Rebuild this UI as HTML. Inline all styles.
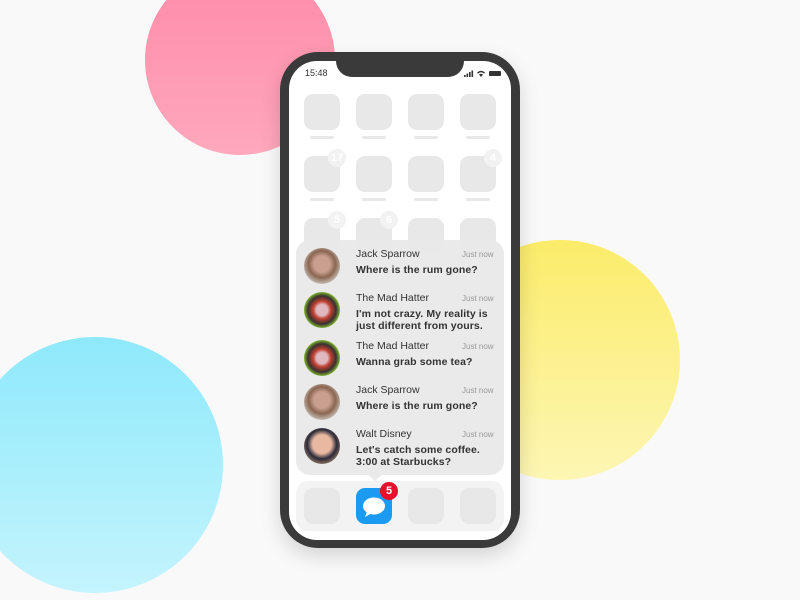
<!DOCTYPE html>
<html><head><style>
*{margin:0;padding:0;box-sizing:border-box}
body{width:800px;height:600px;background:#f9f9f9;position:relative;overflow:hidden;font-family:"Liberation Sans",sans-serif}
.c{position:absolute;border-radius:50%}
.phone{position:absolute;left:280px;top:52px;width:240px;height:496px;background:#3a3a3a;border-radius:38px;box-shadow:0 8px 20px rgba(0,0,0,.15)}
.screen{position:absolute;left:289px;top:61px;width:222px;height:479px;background:#fff;border-radius:28px;overflow:hidden}
.notch{position:absolute;left:336px;top:52px;width:128px;height:25px;background:#3a3a3a;border-radius:0 0 16px 16px}
.ic{position:absolute;width:36px;height:36px;background:#e8e8e8;border-radius:9px}
.lb{position:absolute;width:24px;height:3px;background:#e8e8e8;border-radius:2px}
.bd{position:absolute;width:18px;height:18px;border-radius:50%;background:#f2f2f2;color:#fff;font-size:11px;font-weight:bold;text-align:center;line-height:18px}
.panel{position:absolute;left:296px;top:240px;width:208px;height:235px;background:rgba(232,232,232,.93);border-radius:14px}
.av{position:absolute;left:304px;width:36px;height:36px;border-radius:50%}
.nm{position:absolute;left:356px;font-size:10.5px;color:#333}
.tm{position:absolute;left:462px;font-size:8px;color:#999}
.ms{position:absolute;left:356px;font-size:10.5px;font-weight:bold;color:#333;line-height:12px;letter-spacing:.1px}
</style></head><body>
<div class="c" style="left:145px;top:-35px;width:190px;height:190px;background:linear-gradient(#fd8aa6,#ffa8bc)"></div>
<div class="c" style="left:440px;top:240px;width:240px;height:240px;background:linear-gradient(#fbec6a,#fdf6b4)"></div>
<div class="c" style="left:-33px;top:337px;width:256px;height:256px;background:linear-gradient(#8ee9fb,#c4f4fd)"></div>
<div class="phone"></div>
<div class="screen"></div>
<div class="notch"></div>
<div style="position:absolute;left:305px;top:68px;font-size:9px;color:#333">15:48</div>
<svg style="position:absolute;left:463px;top:69px" width="40" height="9" viewBox="0 0 40 9">
<rect x="1" y="6" width="1.6" height="2" fill="#333"/><rect x="3.5" y="4.5" width="1.6" height="3.5" fill="#333"/><rect x="6" y="3" width="1.6" height="5" fill="#333"/><rect x="8.5" y="1.5" width="1.6" height="6.5" fill="#333"/>
<path d="M14 3.5 Q18 0 22 3.5 L21 4.6 Q18 2 15 4.6Z M16 5.5 Q18 4 20 5.5 L18 8Z" fill="#333"/>
<rect x="26" y="2" width="12" height="5" rx="1" fill="#333"/></svg>
<!-- icons -->
<div class="ic" style="left:304px;top:94px"></div><div class="ic" style="left:356px;top:94px"></div><div class="ic" style="left:408px;top:94px"></div><div class="ic" style="left:460px;top:94px"></div>
<div class="lb" style="left:310px;top:136px"></div><div class="lb" style="left:362px;top:136px"></div><div class="lb" style="left:414px;top:136px"></div><div class="lb" style="left:466px;top:136px"></div>
<div class="ic" style="left:304px;top:156px"></div><div class="ic" style="left:356px;top:156px"></div><div class="ic" style="left:408px;top:156px"></div><div class="ic" style="left:460px;top:156px"></div>
<div class="lb" style="left:310px;top:198px"></div><div class="lb" style="left:362px;top:198px"></div><div class="lb" style="left:414px;top:198px"></div><div class="lb" style="left:466px;top:198px"></div>
<div class="bd" style="left:328px;top:149px">17</div><div class="bd" style="left:484px;top:149px">4</div>
<div class="ic" style="left:304px;top:218px"></div><div class="ic" style="left:356px;top:218px"></div><div class="ic" style="left:408px;top:218px"></div><div class="ic" style="left:460px;top:218px"></div>
<div class="bd" style="left:328px;top:211px">5</div><div class="bd" style="left:380px;top:211px">6</div>
<div class="panel"></div>
<div style="position:absolute;left:367px;top:474px;width:0;height:0;border-left:8px solid transparent;border-right:8px solid transparent;border-top:7px solid rgba(232,232,232,.93)"></div>
<div class="av" style="top:248px;background:radial-gradient(circle at 50% 45%,#c9a090 0 30%,#8a6650 50%,#c8c0b8 75%)"></div>
<div class="nm" style="top:248px">Jack Sparrow</div><div class="tm" style="top:250px">Just now</div>
<div class="ms" style="top:264px">Where is the rum gone?</div>
<div class="av" style="top:292px;background:radial-gradient(circle at 50% 50%,#e0b8c0 0 22%,#c04030 35%,#3a3030 55%,#7ab030 70%)"></div>
<div class="nm" style="top:292px">The Mad Hatter</div><div class="tm" style="top:294px">Just now</div>
<div class="ms" style="top:308px">I'm not crazy. My reality is<br>just different from yours.</div>
<div class="av" style="top:340px;background:radial-gradient(circle at 50% 50%,#e0b8c0 0 22%,#c04030 35%,#3a3030 55%,#7ab030 70%)"></div>
<div class="nm" style="top:340px">The Mad Hatter</div><div class="tm" style="top:342px">Just now</div>
<div class="ms" style="top:356px">Wanna grab some tea?</div>
<div class="av" style="top:384px;background:radial-gradient(circle at 50% 45%,#c9a090 0 30%,#8a6650 50%,#c8c0b8 75%)"></div>
<div class="nm" style="top:384px">Jack Sparrow</div><div class="tm" style="top:386px">Just now</div>
<div class="ms" style="top:400px">Where is the rum gone?</div>
<div class="av" style="top:428px;background:radial-gradient(circle at 50% 45%,#e8b8a0 0 35%,#2a2a3a 55%,#8a7060 75%)"></div>
<div class="nm" style="top:428px">Walt Disney</div><div class="tm" style="top:430px">Just now</div>
<div class="ms" style="top:444px">Let's catch some coffee.<br>3:00 at Starbucks?</div>
<!-- dock -->
<div style="position:absolute;left:296px;top:481px;width:208px;height:50px;background:#f3f3f3;border-radius:12px"></div>
<div class="ic" style="left:304px;top:488px"></div>
<div class="ic" style="left:356px;top:488px;background:#1a9af0"></div>
<svg style="position:absolute;left:361px;top:494px" width="26" height="26" viewBox="0 0 26 26"><ellipse cx="13" cy="12" rx="11" ry="8.5" fill="#fff"/><path d="M6 17 L4 23 L11 19 Z" fill="#fff"/></svg>
<div style="position:absolute;left:380px;top:482px;width:18px;height:18px;border-radius:50%;background:#e8112d;color:#fff;font-size:11px;font-weight:bold;text-align:center;line-height:18px">5</div>
<div class="ic" style="left:408px;top:488px"></div><div class="ic" style="left:460px;top:488px"></div>
</body></html>
